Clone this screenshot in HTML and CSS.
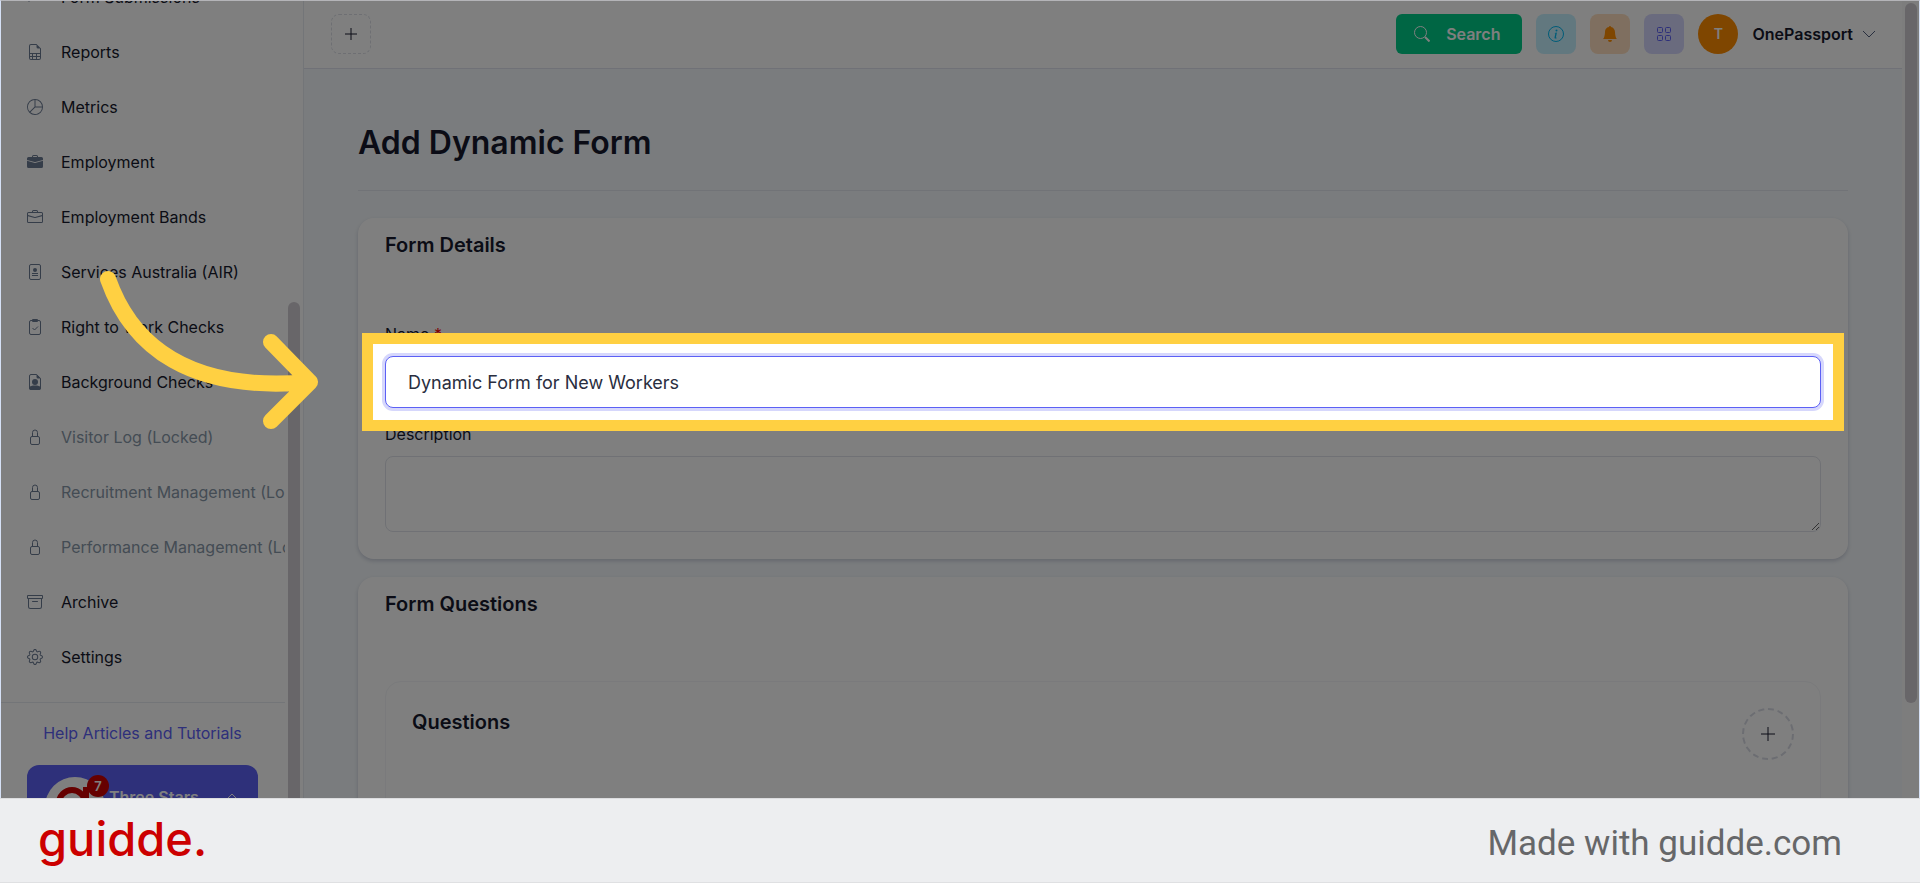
FILE: index.html
```
<!DOCTYPE html>
<html lang="en">
<head>
    <meta charset="UTF-8">
    <meta name="viewport" content="width=device-width, initial-scale=1.0">
    <title>Add Dynamic Form</title>
    <link rel="stylesheet" href="styles.css">
</head>
<body>
    <div class="screen">
        <aside class="sidebar">
            <nav class="nav">
                <a class="nav-item" href="#">
                    <svg class="icon" viewBox="0 0 16 16"><path d="M5 11.5h9M5 7.5h9M5 3.500h9" stroke="currentColor"/><circle cx="2" cy="11.500" r="1"/><circle cx="2" cy="7.500" r="1"/></svg>
                    <span>Form Submissions</span>
                </a>
                <a class="nav-item" href="#">
                    <svg class="icon" viewBox="0 0 16 16"><path d="M14 14V4.500L9.500 0H4a2 2 0 0 0-2 2v12a2 2 0 0 0 2 2h8a2 2 0 0 0 2-2zM9.500 3A1.500 1.500 0 0 0 11 4.500h2V9H3V2a1 1 0 0 1 1-1h5.500v2zM3 12v-2h2v2H3zm0 1h2v2H4a1 1 0 0 1-1-1v-1zm3 2v-2h3v2H6zm4 0v-2h3v1a1 1 0 0 1-1 1h-2zm3-3h-3v-2h3v2zm-7 0v-2h3v2H6z"/></svg>
                    <span>Reports</span>
                </a>
                <a class="nav-item" href="#">
                    <svg class="icon" viewBox="0 0 16 16"><path d="M7.500 1.018a7 7 0 0 0-4.790 11.566L7.500 7.793V1.018zm1 0V7.500h6.482A7.001 7.001 0 0 0 8.500 1.018zM14.982 8.500H8.207l-4.790 4.790A7 7 0 0 0 14.982 8.500zM0 8a8 8 0 1 1 16 0A8 8 0 0 1 0 8z"/></svg>
                    <span>Metrics</span>
                </a>
                <a class="nav-item" href="#">
                    <svg class="icon" viewBox="0 0 16 16"><path d="M6.500 1A1.500 1.500 0 0 0 5 2.500V3H1.500A1.500 1.500 0 0 0 0 4.500v1.384l7.614 2.030a1.500 1.500 0 0 0 .772 0L16 5.884V4.500A1.500 1.500 0 0 0 14.500 3H11v-.500A1.500 1.500 0 0 0 9.500 1h-3zm0 1h3a.500.500 0 0 1 .500.500V3H6v-.500a.500.500 0 0 1 .500-.500z"/><path d="M0 12.500A1.500 1.500 0 0 0 1.500 14h13a1.500 1.500 0 0 0 1.500-1.500V6.850L8.129 8.947a.500.500 0 0 1-.258 0L0 6.850v5.650z"/></svg>
                    <span>Employment</span>
                </a>
                <a class="nav-item" href="#">
                    <svg class="icon" viewBox="0 0 16 16"><path d="M6.500 1A1.500 1.500 0 0 0 5 2.500V3H1.500A1.500 1.500 0 0 0 0 4.500v8A1.500 1.500 0 0 0 1.500 14h13a1.500 1.500 0 0 0 1.500-1.500v-8A1.500 1.500 0 0 0 14.500 3H11v-.500A1.500 1.500 0 0 0 9.500 1h-3zm0 1h3a.500.500 0 0 1 .500.500V3H6v-.500a.500.500 0 0 1 .500-.500zm1.886 6.914L15 7.151V12.500a.500.500 0 0 1-.500.500h-13a.500.500 0 0 1-.500-.500V7.150l6.614 1.764a1.500 1.500 0 0 0 .772 0zM1.500 4h13a.500.500 0 0 1 .500.500v1.616L8.129 7.948a.500.500 0 0 1-.258 0L1 6.116V4.500a.500.500 0 0 1 .500-.500z"/></svg>
                    <span>Employment Bands</span>
                </a>
                <a class="nav-item" href="#">
                    <svg class="icon" viewBox="0 0 16 16"><rect x="2.500" y=".500" width="11" height="15" rx="1.500" fill="none" stroke="currentColor"/><circle cx="8" cy="6" r="2"/><path d="M5 9.500h6M5 11.500h6" stroke="currentColor"/></svg>
                    <span>Services Australia (AIR)</span>
                </a>
                <a class="nav-item" href="#">
                    <svg class="icon" viewBox="0 0 16 16"><rect x="2.500" y="1.500" width="11" height="14" rx="1.500" fill="none" stroke="currentColor"/><rect x="5" y="0" width="6" height="3" rx="1"/><path d="M5.500 9l2 2 3.500-3.500" fill="none" stroke="currentColor"/></svg>
                    <span>Right to Work Checks</span>
                </a>
                <a class="nav-item" href="#">
                    <svg class="icon" viewBox="0 0 16 16"><path d="M9.500 .500H4A1.500 1.500 0 0 0 2.500 2v12A1.500 1.500 0 0 0 4 15.500h8a1.500 1.500 0 0 0 1.500-1.500V4.500z" fill="none" stroke="currentColor"/><path d="M9.500 0v3A1.500 1.500 0 0 0 11 4.500h3z"/><circle cx="8" cy="8" r="3"/><path d="M2 13.500c1-1.500 3-2 6-2s5 .500 6 2V14a2 2 0 0 1-2 2H4a2 2 0 0 1-2-2z"/></svg>
                    <span>Background Checks</span>
                </a>
                <a class="nav-item locked" href="#">
                    <svg class="icon" viewBox="0 0 16 16"><path d="M5.500 7V3.500a2.500 2.500 0 0 1 5 0V7" fill="none" stroke="currentColor"/><rect x="3.500" y="7.500" width="9" height="8" rx="1.500" fill="none" stroke="currentColor"/></svg>
                    <span>Visitor Log (Locked)</span>
                </a>
                <a class="nav-item locked" href="#">
                    <svg class="icon" viewBox="0 0 16 16"><path d="M5.500 7V3.500a2.500 2.500 0 0 1 5 0V7" fill="none" stroke="currentColor"/><rect x="3.500" y="7.500" width="9" height="8" rx="1.500" fill="none" stroke="currentColor"/></svg>
                    <span>Recruitment Management (Locked)</span>
                </a>
                <a class="nav-item locked" href="#">
                    <svg class="icon" viewBox="0 0 16 16"><path d="M5.500 7V3.500a2.500 2.500 0 0 1 5 0V7" fill="none" stroke="currentColor"/><rect x="3.500" y="7.500" width="9" height="8" rx="1.500" fill="none" stroke="currentColor"/></svg>
                    <span>Performance Management (Locked)</span>
                </a>
                <a class="nav-item" href="#">
                    <svg class="icon" viewBox="0 0 16 16"><path d="M0 2a1 1 0 0 1 1-1h14a1 1 0 0 1 1 1v2a1 1 0 0 1-1 1v7.500a2.500 2.500 0 0 1-2.500 2.500h-9A2.500 2.500 0 0 1 1 12.500V5a1 1 0 0 1-1-1V2zm2 3v7.500A1.500 1.500 0 0 0 3.500 14h9a1.500 1.500 0 0 0 1.500-1.500V5H2zm13-3H1v2h14V2zM5 7.500a.500.500 0 0 1 .500-.500h5a.500.500 0 0 1 0 1h-5a.500.500 0 0 1-.500-.500z"/></svg>
                    <span>Archive</span>
                </a>
                <a class="nav-item" href="#">
                    <svg class="icon" viewBox="0 0 16 16"><path d="M8 4.754a3.246 3.246 0 1 0 0 6.492 3.246 3.246 0 0 0 0-6.492zM5.754 8a2.246 2.246 0 1 1 4.492 0 2.246 2.246 0 0 1-4.492 0z"/><path d="M9.796 1.343c-.527-1.790-3.065-1.790-3.592 0l-.094.319a.873.873 0 0 1-1.255.520l-.292-.160c-1.640-.892-3.433.902-2.540 2.541l.159.292a.873.873 0 0 1-.520 1.255l-.319.094c-1.790.527-1.790 3.065 0 3.592l.319.094a.873.873 0 0 1 .520 1.255l-.160.292c-.892 1.640.901 3.434 2.541 2.540l.292-.159a.873.873 0 0 1 1.255.520l.094.319c.527 1.790 3.065 1.790 3.592 0l.094-.319a.873.873 0 0 1 1.255-.520l.292.160c1.640.893 3.434-.902 2.540-2.541l-.159-.292a.873.873 0 0 1 .520-1.255l.319-.094c1.790-.527 1.790-3.065 0-3.592l-.319-.094a.873.873 0 0 1-.520-1.255l.160-.292c.893-1.640-.902-3.433-2.541-2.540l-.292.159a.873.873 0 0 1-1.255-.520l-.094-.319zm-2.633.283c.246-.835 1.428-.835 1.674 0l.094.319a1.873 1.873 0 0 0 2.693 1.115l.291-.160c.764-.415 1.600.420 1.184 1.185l-.159.292a1.873 1.873 0 0 0 1.116 2.692l.318.094c.835.246.835 1.428 0 1.674l-.319.094a1.873 1.873 0 0 0-1.115 2.693l.160.291c.415.764-.420 1.600-1.185 1.184l-.291-.159a1.873 1.873 0 0 0-2.693 1.116l-.094.318c-.246.835-1.428.835-1.674 0l-.094-.319a1.873 1.873 0 0 0-2.692-1.115l-.292.160c-.764.415-1.600-.420-1.184-1.185l.159-.291A1.873 1.873 0 0 0 1.945 8.930l-.319-.094c-.835-.246-.835-1.428 0-1.674l.319-.094A1.873 1.873 0 0 0 3.060 4.377l-.160-.292c-.415-.764.420-1.600 1.185-1.184l.292.159a1.873 1.873 0 0 0 2.692-1.115l.094-.319z"/></svg>
                    <span>Settings</span>
                </a>
            </nav>
            <div class="sidebar-bottom">
                <a class="help-link" href="#">Help Articles and Tutorials</a>
                <button class="account" type="button">
                    <span class="account-logo">
                        <svg viewBox="0 0 60 60"><circle cx="30" cy="30" r="30" fill="#fff"/><circle cx="27" cy="26" r="13" fill="none" stroke="#c00" stroke-width="6"/><path d="M41 10v30a14 14 0 0 1-24 8" fill="none" stroke="#c00" stroke-width="6"/></svg>
                        <span class="badge">7</span>
                    </span>
                    <span class="account-name">Three Stars</span>
                    <svg class="chevron" viewBox="0 0 12 12"><path d="M1 8l5-5 5 5" fill="none" stroke="currentColor"/></svg>
                </button>
            </div>
            <div class="sidebar-thumb"></div>
        </aside>

        <div class="content">
            <header class="topbar">
                <button class="add-button" type="button" aria-label="Add">
                    <svg class="icon" viewBox="0 0 16 16"><path d="M8 2v12M2 8h12" stroke="currentColor"/></svg>
                </button>
                <div class="topbar-right">
                    <button class="search-button" type="button">
                        <svg class="icon" viewBox="0 0 16 16"><circle cx="6.500" cy="6.500" r="6" fill="none" stroke="currentColor"/><path d="M11 11l4.500 4.500" stroke="currentColor" stroke-width="2"/></svg>
                        <span>Search</span>
                    </button>
                    <button class="square info" type="button" aria-label="Information">
                        <svg class="icon" viewBox="0 0 16 16"><circle cx="8" cy="8" r="7.500" fill="none" stroke="currentColor"/><path d="M8.930 6.588l-2.290.287-.082.380.450.083c.294.070.352.176.288.469l-.738 3.468c-.194.897.105 1.319.808 1.319.545 0 1.178-.252 1.465-.598l.088-.416c-.200.176-.492.246-.686.246-.275 0-.375-.193-.304-.533L8.930 6.588z"/><circle cx="8.500" cy="4.500" r="1"/></svg>
                    </button>
                    <button class="square alerts" type="button" aria-label="Notifications">
                        <svg class="icon" viewBox="0 0 16 16"><path d="M8 16a2 2 0 0 0 2-2H6a2 2 0 0 0 2 2zm.995-14.901a1 1 0 1 0-1.990 0A5.002 5.002 0 0 0 3 6c0 1.098-.500 6-2 7h14c-1.500-1-2-5.902-2-7 0-2.420-1.720-4.440-4.005-4.901z"/></svg>
                    </button>
                    <button class="square apps" type="button" aria-label="Apps">
                        <svg class="icon" viewBox="0 0 16 16"><g fill="none" stroke="currentColor"><rect x="1.500" y="1.500" width="5" height="5" rx="1"/><rect x="9.500" y="1.500" width="5" height="5" rx="1"/><rect x="1.500" y="9.500" width="5" height="5" rx="1"/><rect x="9.500" y="9.500" width="5" height="5" rx="1"/></g></svg>
                    </button>
                    <button class="user" type="button">
                        <span class="avatar">T</span>
                        <span class="user-name">OnePassport</span>
                        <svg class="chevron" viewBox="0 0 12 12"><path d="M0 3l6 6 6-6" fill="none" stroke="currentColor"/></svg>
                    </button>
                </div>
            </header>

            <main class="page">
                <h1>Add Dynamic Form</h1>
                <form>
                    <section class="card">
                        <h2>Form Details</h2>
                        <div class="fields">
                            <label for="name">Name <span class="required">*</span></label>
                            <div class="highlighted">
                                <input id="name" type="text" value="Dynamic Form for New Workers">
                                <div class="spotlight"></div>
                            </div>
                            <label for="description">Description</label>
                            <textarea id="description"></textarea>
                        </div>
                    </section>
                    <section class="card">
                        <h2>Form Questions</h2>
                        <div class="questions">
                            <h3>Questions</h3>
                            <button class="add-question" type="button" aria-label="Add question">
                                <svg class="icon" viewBox="0 0 16 16"><path d="M8 1v14M1 8h14" stroke="currentColor"/></svg>
                            </button>
                        </div>
                    </section>
                </form>
            </main>
        </div>

        <div class="scroll-track"><div class="scroll-thumb"></div></div>

        <svg class="arrow" viewBox="0 0 220 160">
            <path d="M10 10C34 78 92 124 212 113M173 73L212 113L173 152"/>
        </svg>
    </div>

    <footer class="footer">
        <span class="brand">guidde.</span>
        <span class="made-with">Made with guidde.com</span>
    </footer>
</body>
</html>
```
FILE: styles.css
```
* {
    box-sizing: border-box;
}
body {
    margin: 0;
    height: 100vh;
    display: flex;
    flex-direction: column;
    font-family: Inter, "Liberation Sans", sans-serif;
    font-size: 16px;
    line-height: 24px;
    color: #16192c;
    background: #fff;
}
button, input, textarea {
    font: inherit;
    color: inherit;
}
button {
    padding: 0;
    border: 0;
    background: none;
    cursor: pointer;
}
a {
    color: inherit;
    text-decoration: none;
}
h1, h2, h3 {
    margin: 0;
    font-weight: 600;
}
.icon {
    width: 16px;
    height: 16px;
    flex: none;
    fill: currentColor;
}
.chevron {
    width: 12px;
    height: 12px;
    flex: none;
}

.screen {
    position: relative;
    flex: 1;
    min-height: 0;
    display: flex;
    overflow: hidden;
    border: 1px solid #d5e0f5;
    border-top-color: #b4b4b8;
    border-bottom: 0;
}

/* Sidebar */
.sidebar {
    position: relative;
    flex: none;
    width: 303px;
    padding-right: 18px;
    border-right: 1px solid #e7eaf0;
    overflow: hidden;
}
/* the list is scrolled, so its first entry is cut by the top edge */
.nav {
    margin-top: -32px;
    overflow: hidden;
}
.nav-item {
    display: flex;
    align-items: center;
    gap: 18px;
    height: 55px;
    padding-left: 26px;
    white-space: nowrap;
}
.nav-item .icon {
    color: #6b7b93;
}
.nav-item.locked {
    color: #8898a9;
}
.sidebar-bottom {
    margin-top: 18px;
    padding: 18px 27px 0 26px;
    border-top: 1px solid #e7eaf0;
}
.help-link {
    display: block;
    text-align: center;
    color: #5c60f5;
}
.account {
    display: flex;
    align-items: center;
    width: 100%;
    height: 64px;
    margin-top: 20px;
    padding: 0 20px 0 18px;
    border-radius: 12px;
    background: #5c60f5;
    color: #fff;
    font-weight: 600;
    text-align: left;
}
.account-logo {
    position: relative;
    width: 60px;
    height: 60px;
    align-self: flex-start;
    margin-top: 12px;
    flex: none;
}
.badge {
    position: absolute;
    top: -2px;
    right: -4px;
    width: 22px;
    height: 22px;
    border-radius: 50%;
    background: #c00;
    font-size: 13px;
    line-height: 22px;
    text-align: center;
}
.account-name {
    flex: 1;
    margin-left: 4px;
}
.sidebar-thumb {
    position: absolute;
    top: 301px;
    right: 3px;
    bottom: 0;
    width: 12px;
    border-radius: 6px 6px 0 0;
    background: #d0ccd2;
}

/* Top bar */
.content {
    flex: 1;
    min-width: 0;
    background: #f5f9fc;
}
.topbar {
    display: flex;
    align-items: center;
    justify-content: space-between;
    height: 68px;
    padding: 0 27px 2px;
    border-bottom: 1px solid #e0e3ee;
    background: #fff;
}
.topbar button {
    display: flex;
    align-items: center;
    justify-content: center;
    height: 40px;
}
.topbar-right {
    display: flex;
    gap: 14px;
}
.topbar .add-button {
    width: 40px;
    border: 1px dashed #dcdfe6;
    border-radius: 8px;
}
.topbar .search-button {
    gap: 16px;
    padding: 0 22px 0 18px;
    border-radius: 6px;
    background: #00cc88;
    color: #fff;
    font-weight: 600;
}
.square {
    width: 40px;
    border-radius: 8px;
}
.info {
    background: #c4f0ff;
    color: #00b8f0;
}
.alerts {
    background: #ffdfc0;
    color: #ff8c00;
}
.apps {
    background: #d5d6fc;
    color: #5c60f5;
}
.avatar {
    width: 40px;
    height: 40px;
    margin-right: 14px;
    border-radius: 50%;
    background: #ff8c00;
    color: #fff;
    font-size: 14px;
    font-weight: 600;
    line-height: 40px;
}
.user-name {
    margin-right: 10px;
    font-weight: 600;
}
.user .chevron {
    color: #525f7f;
}

/* Page */
.page {
    padding: 0 54px;
}
h1 {
    padding: 54px 0 27px;
    border-bottom: 1px solid #e3e7ee;
    font-size: 32px;
    line-height: 40px;
}
form {
    display: flex;
    flex-direction: column;
    gap: 18px;
    padding-top: 27px;
}
.card {
    padding: 0 27px 27px;
    border-radius: 16px;
    background: #fff;
    box-shadow: 0 2px 4px rgba(31, 41, 90, 0.2);
}
h2, h3 {
    font-size: 20px;
    line-height: 54px;
}
.fields {
    display: flex;
    flex-direction: column;
    gap: 10px;
    padding-top: 50px;
}
.required {
    color: #ff0000;
}
.highlighted {
    position: relative;
    margin-bottom: 4px;
}
input, textarea {
    display: block;
    width: 100%;
    border: 1px solid #e0e3ea;
    border-radius: 8px;
    background: #fff;
    font-size: 18px;
    outline: 0;
}
#name {
    height: 52px;
    padding: 0 22px;
    border-color: #5c60f5;
    box-shadow: 0 0 0 3px #d6d7fc;
    color: #2a2e40;
}
textarea {
    height: 76px;
    resize: vertical;
}
.questions {
    display: flex;
    align-items: flex-start;
    justify-content: space-between;
    height: 300px;
    margin-top: 50px;
    padding: 26px;
    border: 1px solid #f4f5f8;
    border-radius: 16px;
}
h3 {
    line-height: 28px;
}
.add-question {
    display: flex;
    align-items: center;
    justify-content: center;
    width: 52px;
    height: 52px;
    border: 2px dashed #d8dbe4;
    border-radius: 50%;
}

.scroll-track {
    flex: none;
    width: 17px;
    padding: 2px 2px 0 3px;
    background: #fbfbfb;
}
.scroll-thumb {
    height: 88%;
    border-radius: 6px;
    background: #d0ccd2;
}

/* Frame round the active field, its shadow dims the rest of the screen */
.spotlight {
    position: absolute;
    inset: -23px;
    z-index: 1;
    border: 11px solid #ffd042;
    box-shadow: 0 0 0 3000px rgba(0, 0, 0, 0.5);
    pointer-events: none;
}
.arrow {
    position: absolute;
    top: 268px;
    left: 97px;
    z-index: 2;
    width: 220px;
    height: 160px;
    overflow: visible;
    fill: none;
    stroke: #ffd042;
    stroke-width: 16px;
    stroke-linecap: round;
    stroke-linejoin: round;
}

/* Footer */
.footer {
    display: flex;
    align-items: center;
    justify-content: space-between;
    flex: none;
    height: 85px;
    padding: 0 78px 0 38px;
    border-top: 1px solid #dcdddf;
    border-bottom: 1px solid #dfe0e2;
    background: #edeef0;
}
.brand {
    padding-bottom: 4px;
    font-size: 47px;
    font-weight: 500;
    color: #c00;
}
.made-with {
    padding-top: 6px;
    font-family: Roboto, sans-serif;
    font-size: 35px;
    color: #666769;
}
```
